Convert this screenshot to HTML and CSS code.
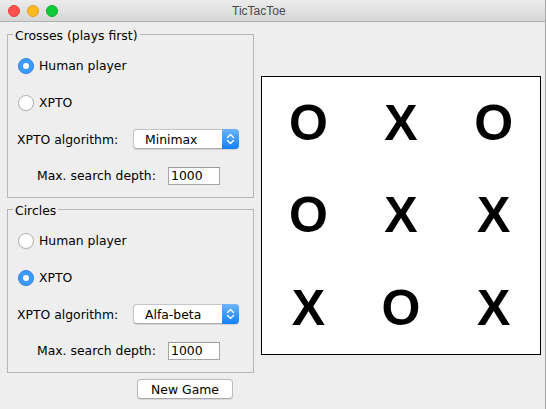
FILE: index.html
```html
<!DOCTYPE html>
<html>
<head>
<meta charset="utf-8">
<title>TicTacToe</title>
<link rel="stylesheet" href="styles.css">
</head>
<body>
<div class="window">
  <div class="titlebar">
    <div class="lights">
      <span class="light red"></span>
      <span class="light yellow"></span>
      <span class="light green"></span>
    </div>
    <div class="title">TicTacToe</div>
  </div>
  <div class="content">
    <div class="left">
      <div class="group">
        <div class="group-title">Crosses (plays first)</div>
        <div class="row radio-row"><span class="radio on"></span><span>Human player</span></div>
        <div class="row radio-row"><span class="radio"></span><span>XPTO</span></div>
        <div class="row algo-row">
          <span class="algo-label">XPTO algorithm:</span>
          <div class="combo"><span class="combo-text">Minimax</span><span class="combo-arrow"><svg width="17" height="20" viewBox="0 0 17 20"><path d="M5.5 8.5 L8.5 5.5 L11.5 8.5 M5.5 11.5 L8.5 14.5 L11.5 11.5" fill="none" stroke="#fff" stroke-width="1.4" stroke-linecap="round" stroke-linejoin="round"/></svg></span></div>
        </div>
        <div class="row depth-row">
          <span class="depth-label">Max. search depth:</span>
          <div class="field">1000</div>
        </div>
      </div>
      <div class="group">
        <div class="group-title">Circles</div>
        <div class="row radio-row"><span class="radio"></span><span>Human player</span></div>
        <div class="row radio-row"><span class="radio on"></span><span>XPTO</span></div>
        <div class="row algo-row">
          <span class="algo-label">XPTO algorithm:</span>
          <div class="combo"><span class="combo-text">Alfa-beta</span><span class="combo-arrow"><svg width="17" height="20" viewBox="0 0 17 20"><path d="M5.5 8.5 L8.5 5.5 L11.5 8.5 M5.5 11.5 L8.5 14.5 L11.5 11.5" fill="none" stroke="#fff" stroke-width="1.4" stroke-linecap="round" stroke-linejoin="round"/></svg></span></div>
        </div>
        <div class="row depth-row">
          <span class="depth-label">Max. search depth:</span>
          <div class="field">1000</div>
        </div>
      </div>
      <div class="button-row"><button class="btn">New Game</button></div>
    </div>
    <div class="board-wrap">
      <div class="board">
        <div class="cell">O</div><div class="cell">X</div><div class="cell">O</div>
        <div class="cell">O</div><div class="cell">X</div><div class="cell">X</div>
        <div class="cell">X</div><div class="cell">O</div><div class="cell">X</div>
      </div>
    </div>
  </div>
</div>
</body>
</html>
```
FILE: styles.css
```css
* { box-sizing: border-box; }
html, body { margin: 0; padding: 0; background: #eeeeee; }
body {
  font-family: "DejaVu Sans", sans-serif;
  font-size: 12.4px;
  color: #000;
}
.window {
  width: 546px;
  height: 409px;
  border-right: 1px solid #a8a8a8;
  background: #eeeeee;
  overflow: hidden;
}
.titlebar {
  height: 22px;
  border-bottom: 1px solid #b1b1b1;
  background: linear-gradient(#ececec, #d6d6d6);
  display: flex;
  align-items: center;
  padding-left: 8px;
}
.lights { display: flex; gap: 7px; }
.light {
  width: 12px;
  height: 12px;
  border-radius: 50%;
  display: block;
}
.red { background: #fd4f4c; border: 0.5px solid #e0443f; }
.yellow { background: #fdbb1f; border: 0.5px solid #dfa02a; }
.green { background: #0ccc37; border: 0.5px solid #1aaa30; }
.title {
  margin-left: 174px;
  font-family: "Liberation Sans", sans-serif;
  font-size: 12px;
  color: #4a4a4a;
}
.content {
  display: flex;
  height: 387px;
}
.left {
  width: 254px;
  padding-left: 7px;
  padding-top: 12px;
  flex: none;
}
.group {
  position: relative;
  width: 247px;
  border: 1px solid #b6b6b6;
  padding: 12px 0 3px 0;
}
.group + .group { margin-top: 11px; }
.group-title {
  position: absolute;
  top: -7px;
  left: 5px;
  padding: 0 2px;
  line-height: 15px;
  background: #eeeeee;
}
.row {
  display: flex;
  align-items: center;
  height: 37px;
}
.algo-row { height: 36px; }
.radio-row { padding-left: 10px; gap: 5px; }
.radio {
  width: 16px;
  height: 16px;
  border-radius: 50%;
  background: #fff;
  border: 1px solid #b4b4b4;
  box-shadow: 0 0.5px 1px rgba(0,0,0,0.08);
  display: flex;
  align-items: center;
  justify-content: center;
  flex: none;
}
.radio.on {
  background: #3c9afc;
  border-color: #2f86ec;
}
.radio.on::after {
  content: "";
  width: 6px;
  height: 6px;
  border-radius: 50%;
  background: #fff;
}
.algo-row { padding-left: 9px; }
.algo-label { width: 116px; flex: none; }
.combo {
  width: 106px;
  height: 20px;
  border: 1px solid #c6c6c6;
  border-bottom-color: #ababab;
  border-radius: 4px;
  background: #fff;
  box-shadow: 0 0.5px 1px rgba(0,0,0,0.12);
  display: flex;
  align-items: center;
}
.combo-text { padding-left: 11px; flex: 1; }
.combo-arrow {
  width: 17px;
  height: 20px;
  margin: -1px -1px -1px 0;
  border-radius: 0 4px 4px 0;
  background: linear-gradient(#6db4fb, #1480f7);
  display: block;
}
.combo-arrow svg { display: block; }
.depth-row { padding-left: 29px; }
.depth-label { width: 131px; flex: none; }
.field {
  width: 52px;
  height: 18px;
  border: 1px solid #a6a6a6;
  border-top-color: #979797;
  background: #fff;
  padding-left: 2px;
  line-height: 16px;
}
.button-row {
  margin-top: 6px;
  padding-left: 130px;
}
.btn {
  width: 96px;
  height: 20px;
  border: 1px solid #bcbcbc;
  border-bottom-color: #a8a8a8;
  border-radius: 4px;
  background: #fff;
  box-shadow: 0 0.5px 1px rgba(0,0,0,0.1);
  font-family: "DejaVu Sans", sans-serif;
  font-size: 12.4px;
  color: #000;
  padding: 0;
  display: block;
}
.board-wrap {
  flex: 1;
  display: flex;
  align-items: center;
  padding-left: 7px;
}
.board {
  width: 280px;
  height: 279px;
  border: 1px solid #000;
  background: #fff;
  display: grid;
  grid-template-columns: repeat(3, 1fr);
  grid-template-rows: repeat(3, 1fr);
}
.cell {
  display: flex;
  align-items: center;
  justify-content: center;
  font-family: "Liberation Sans", sans-serif;
  font-weight: bold;
  font-size: 50px;
}
```
